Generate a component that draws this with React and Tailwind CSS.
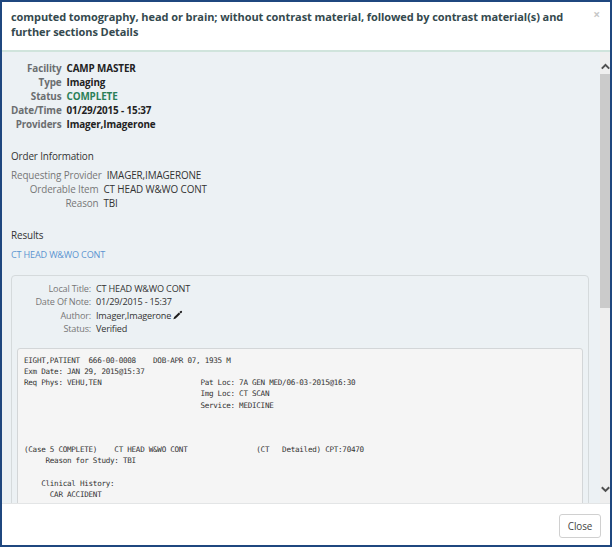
import React from "react";

const facility = [
  ["Facility", "CAMP MASTER", "text-[#222]"],
  ["Type", "Imaging", "text-[#222]"],
  ["Status", "COMPLETE", "text-[#2a7f58]"],
  ["Date/Time", "01/29/2015 - 15:37", "text-[#222]"],
  ["Providers", "Imager,Imagerone", "text-[#222]"],
];

const order = [
  ["Requesting Provider", "IMAGER,IMAGERONE"],
  ["Orderable Item", "CT HEAD W&WO CONT"],
  ["Reason", "TBI"],
];

const note = [
  ["Local Title:", "CT HEAD W&WO CONT"],
  ["Date Of Note:", "01/29/2015 - 15:37"],
  ["Author:", "Imager,Imagerone"],
  ["Status:", "Verified"],
];

const report = [
  "EIGHT,PATIENT  666-00-0008    DOB-APR 07, 1935 M",
  "Exm Date: JAN 29, 2015@15:37",
  "Req Phys: VEHU,TEN                       Pat Loc: 7A GEN MED/06-03-2015@16:30",
  "                                         Img Loc: CT SCAN",
  "                                         Service: MEDICINE",
  "",
  "",
  "",
  "(Case 5 COMPLETE)    CT HEAD W&WO CONT                (CT   Detailed) CPT:70470",
  "     Reason for Study: TBI",
  "",
  "    Clinical History:",
  "      CAR ACCIDENT",
].join("\n");

function Pencil() {
  return (
    <svg className="mb-[1px] ml-[2px] h-[10px] w-[10px]" viewBox="0 0 10 10" fill="#1c1c1c">
      <path d="M0.3 9.3 1.2 6.9 5.9 2.5 7.3 3.9 2.7 8.4Z" />
      <path d="M6.4 2 7.6 0.9Q8.1 0.5 8.6 0.9L8.9 1.2Q9.3 1.7 8.9 2.2L7.8 3.4Z" />
    </svg>
  );
}

function Chevron({ down }) {
  return (
    <svg className="h-[7px] w-[9px]" viewBox="0 0 9 7" fill="none" stroke="#505050" strokeWidth="2">
      <path d={down ? "M0.8 1.2 4.5 4.9 8.2 1.2" : "M0.8 5.6 4.5 1.9 8.2 5.6"} />
    </svg>
  );
}

export default function App() {
  return (
    <div className="flex h-[547px] w-[612px] flex-col overflow-hidden border-2 border-[#1f477f] bg-white font-['Open_Sans',sans-serif] text-[9.9px] tracking-[-0.12px] text-[#333]">
      <header className="flex h-[50px] shrink-0 items-start justify-between border-b-2 border-[#d0e4dc] pr-[10px] pl-[9px]">
        <h1 className="pt-[7px] text-[11px] leading-[15px] font-bold tracking-[-0.08px] whitespace-nowrap text-[#34494e]">
          computed tomography, head or brain; without contrast material, followed by contrast material(s) and
          <br />
          further sections Details
        </h1>
        <button className="pt-[6px] text-[12px] leading-[14px] font-bold text-[#c8c8c8]">×</button>
      </header>

      <div className="flex h-[452px] shrink-0 border-b border-[#e3e5e6] bg-[#ecf1f4]">
        <main className="h-full w-[598px] overflow-hidden pt-[9.6px] pl-[9px]">
          <dl className="font-bold">
            {facility.map(([k, v, color]) => (
              <div key={k} className="flex h-[13.9px] items-center whitespace-nowrap">
                <dt className="w-[50.5px] text-right text-[#6b6e70]">{k}</dt>
                <dd className={`ml-[5px] ${color}`}>{v}</dd>
              </div>
            ))}
          </dl>

          <h2 className="mt-[17.9px] h-[14px] leading-[14px]">Order Information</h2>
          <dl className="mt-[5.5px]">
            {order.map(([k, v]) => (
              <div key={k} className="flex h-[13.9px] items-center whitespace-nowrap">
                <dt className="min-w-[87.5px] text-right text-[#777]">{k}</dt>
                <dd className="ml-[5px]">{v}</dd>
              </div>
            ))}
          </dl>

          <h2 className="mt-[18px] h-[14px] leading-[14px]">Results</h2>
          <a className="mt-[6px] block h-[14px] text-[9.1px] leading-[14px] tracking-[-0.18px] text-[#5b94d0]">CT HEAD W&amp;WO CONT</a>

          <section className="mt-[12.5px] h-[300px] w-[578px] rounded-[4px] border border-[#d5dadc] px-[5px] pt-[6px]">
            <dl className="text-[9.1px] tracking-[-0.18px]">
              {note.map(([k, v]) => (
                <div key={k} className="flex h-[13.6px] items-center whitespace-nowrap">
                  <dt className="w-[74px] text-right text-[#777]">{k}</dt>
                  <dd className="ml-[5px] flex items-center">
                    {v}
                    {k === "Author:" && <Pencil />}
                  </dd>
                </div>
              ))}
            </dl>
            <pre className="mt-[12px] h-[230px] w-[566px] rounded-[3px] border border-[#d3d6d8] bg-[#f5f5f5] px-[6px] pt-[6px] font-['DejaVu_Sans_Mono',monospace] text-[7.6px] leading-[11.15px] tracking-[-0.27px] text-[#333]">
              {report}
            </pre>
          </section>
        </main>
        <div className="flex h-full w-[10px] flex-col items-center bg-[#efefef]">
          <div className="flex h-[22px] w-full shrink-0 items-center justify-center pt-[6px]">
            <Chevron />
          </div>
          <div className="h-[234px] w-full bg-[#cbcbcb]" />
          <div className="mt-auto flex h-[17px] items-start">
            <Chevron down />
          </div>
        </div>
      </div>

      <footer className="flex flex-1 items-start justify-end pt-[10px] pr-[9px]">
        <button className="h-[24px] w-[42px] rounded-[3px] border border-[#d0d0d0] bg-white leading-[22px] text-[#444]">
          Close
        </button>
      </footer>
    </div>
  );
}
